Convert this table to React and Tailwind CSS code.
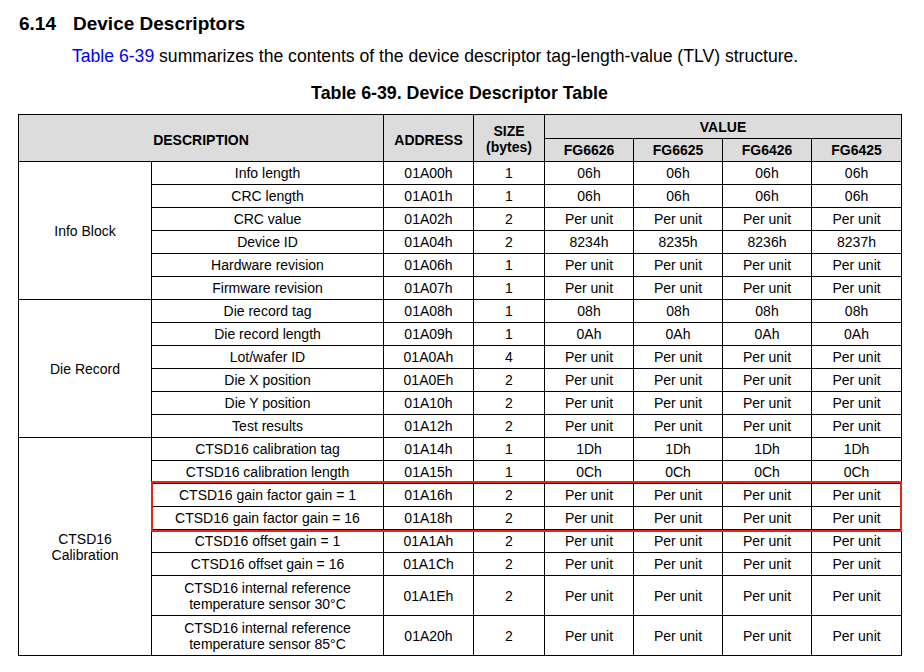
import React from 'react';

const sections = [
  {
    name: ['Info Block'],
    rows: [
      ['Info length', '01A00h', '1', ['06h', '06h', '06h', '06h']],
      ['CRC length', '01A01h', '1', ['06h', '06h', '06h', '06h']],
      ['CRC value', '01A02h', '2', 'Per unit'],
      ['Device ID', '01A04h', '2', ['8234h', '8235h', '8236h', '8237h']],
      ['Hardware revision', '01A06h', '1', 'Per unit'],
      ['Firmware revision', '01A07h', '1', 'Per unit'],
    ],
  },
  {
    name: ['Die Record'],
    rows: [
      ['Die record tag', '01A08h', '1', ['08h', '08h', '08h', '08h']],
      ['Die record length', '01A09h', '1', ['0Ah', '0Ah', '0Ah', '0Ah']],
      ['Lot/wafer ID', '01A0Ah', '4', 'Per unit'],
      ['Die X position', '01A0Eh', '2', 'Per unit'],
      ['Die Y position', '01A10h', '2', 'Per unit'],
      ['Test results', '01A12h', '2', 'Per unit'],
    ],
  },
  {
    name: ['CTSD16', 'Calibration'],
    rows: [
      ['CTSD16 calibration tag', '01A14h', '1', ['1Dh', '1Dh', '1Dh', '1Dh']],
      ['CTSD16 calibration length', '01A15h', '1', ['0Ch', '0Ch', '0Ch', '0Ch']],
      ['CTSD16 gain factor gain = 1', '01A16h', '2', 'Per unit'],
      ['CTSD16 gain factor gain = 16', '01A18h', '2', 'Per unit'],
      ['CTSD16 offset gain = 1', '01A1Ah', '2', 'Per unit'],
      ['CTSD16 offset gain = 16', '01A1Ch', '2', 'Per unit'],
      [['CTSD16 internal reference', 'temperature sensor 30°C'], '01A1Eh', '2', 'Per unit'],
      [['CTSD16 internal reference', 'temperature sensor 85°C'], '01A20h', '2', 'Per unit'],
    ],
  },
];

const td = 'border border-black text-center align-middle p-0 leading-[16px]';
const th = 'border border-black text-center align-middle p-0 font-bold bg-[#dcdcdc] leading-[16px]';

function Lines({ value }) {
  if (!Array.isArray(value)) return value;
  return value.map((line, i) => (
    <React.Fragment key={i}>
      {i > 0 && <br />}
      {line}
    </React.Fragment>
  ));
}

export default function App() {
  return (
    <div className="w-[924px] h-[672px] bg-white text-black overflow-hidden font-['Liberation_Sans',Arial,sans-serif]">
      <h2 className="pt-[12px] pl-[19px] flex text-[19px] leading-[24px] font-bold">
        <span className="w-[54px]">6.14</span>
        <span>Device Descriptors</span>
      </h2>
      <p className="mt-[10px] pl-[72px] text-[17.6px] leading-[20px] whitespace-nowrap">
        <span className="text-[#0000ff]">Table 6-39</span> summarizes the contents of the device descriptor
        tag-length-value (TLV) structure.
      </p>
      <div className="mt-[16px] w-[883px] ml-[18px] text-center text-[17.8px] leading-[22px] font-bold">
        Table 6-39. Device Descriptor Table
      </div>

      <div className="relative mt-[10px] ml-[18px] w-[883px]">
        <table className="table-fixed border-collapse w-[883px] text-[14px]">
          <colgroup>
            <col className="w-[133px]" />
            <col className="w-[232px]" />
            <col className="w-[90px]" />
            <col className="w-[71px]" />
            <col className="w-[89px]" />
            <col className="w-[89px]" />
            <col className="w-[89px]" />
            <col className="w-[90px]" />
          </colgroup>
          <thead>
            <tr className="h-[24px]">
              <th rowSpan={2} colSpan={2} className={th + ' pt-[4px]'}>DESCRIPTION</th>
              <th rowSpan={2} className={th + ' pt-[4px]'}>ADDRESS</th>
              <th rowSpan={2} className={th + ' leading-[15px] pt-[2px]'}>
                SIZE
                <br />
                (bytes)
              </th>
              <th colSpan={4} className={th}>VALUE</th>
            </tr>
            <tr className="h-[23px]">
              <th className={th}>FG6626</th>
              <th className={th}>FG6625</th>
              <th className={th}>FG6426</th>
              <th className={th}>FG6425</th>
            </tr>
          </thead>
          <tbody>
            {sections.map((section) =>
              section.rows.map((row, i) => {
                const [desc, addr, size, vals] = row;
                const values = Array.isArray(vals) ? vals : [vals, vals, vals, vals];
                const tall = Array.isArray(desc);
                return (
                  <tr key={section.name[0] + i} className={tall ? 'h-[40px]' : 'h-[23px]'}>
                    {i === 0 && (
                      <td rowSpan={section.rows.length} className={td}>
                        <Lines value={section.name} />
                      </td>
                    )}
                    <td className={td}>
                      <Lines value={desc} />
                    </td>
                    <td className={td}>{addr}</td>
                    <td className={td}>{size}</td>
                    {values.map((v, j) => (
                      <td key={j} className={td}>
                        {v}
                      </td>
                    ))}
                  </tr>
                );
              })
            )}
          </tbody>
        </table>
        {/* highlight around the gain factor rows */}
        <div className="absolute left-[133px] top-[367px] w-[751px] h-[51px] border-2 border-[#f0201a] pointer-events-none" />
      </div>
    </div>
  );
}
